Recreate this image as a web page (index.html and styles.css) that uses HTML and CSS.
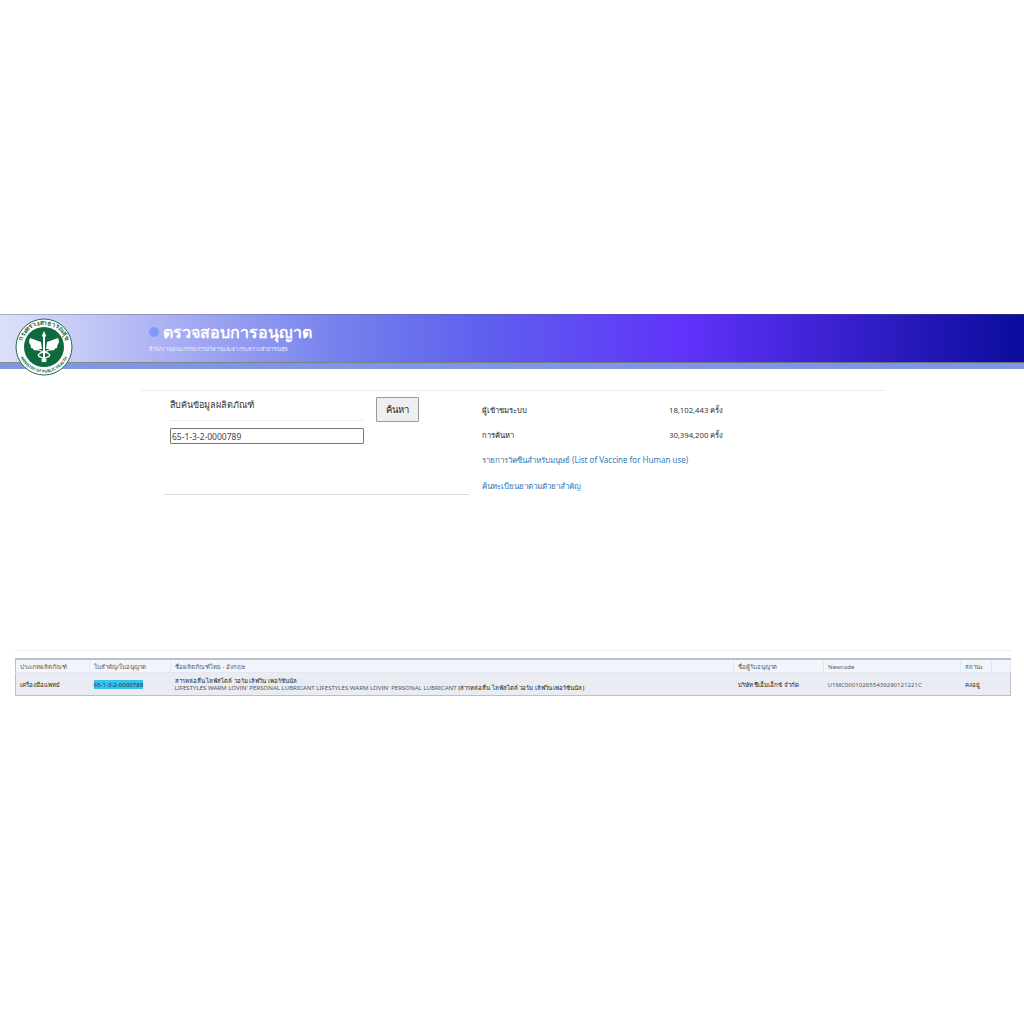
FILE: index.html
```html
<!DOCTYPE html>
<html lang="th">
<head>
  <meta charset="UTF-8" />
  <title>ตรวจสอบการอนุญาต</title>
  <link rel="stylesheet" href="styles.css">
</head>
<body>

  <!-- Banner -->
  <header class="banner">
    <svg class="logo" viewBox="0 0 58 58" aria-label="Logo">
      <defs>
        <path id="ringTop" d="M6.6 29a22.4 22.4 0 0 1 44.8 0" />
        <path id="ringBottom" d="M3.4 29a25.6 25.6 0 0 0 51.2 0" />
      </defs>
      <circle cx="29" cy="29" r="28" fill="#fff" stroke="#1d6b45" stroke-width="1" />
      <circle cx="29" cy="29" r="20" fill="#0f6a3f" />
      <text class="logo-th"><textPath href="#ringTop" startOffset="50%" text-anchor="middle">กระทรวงสาธารณสุข</textPath></text>
      <text class="logo-en"><textPath href="#ringBottom" startOffset="50%" text-anchor="middle">MINISTRY OF PUBLIC HEALTH</textPath></text>
      <path d="M15 20l11 4 1 7h-3l-1 2-2-1-2 .5-1-2-2-.5-.5-3-1-1.500-.5-2.500z" fill="#fff" />
      <path d="M43 20l-11 4-1 7h3l1 2 2-1 2 .5 1-2 2-.5.5-3 1-1.500.5-2.500z" fill="#fff" />
      <path d="M29 13l2.200 5-1.200 1v25h-2V19l-1.200-1z" fill="#fff" />
      <path d="M24 32c3 2 8 2 10 4s-1 3-4 4-4 2-2 4M34 32c-3 2-8 2-10 4s1 3 4 4 4 2 2 4" fill="none" stroke="#fff" stroke-width="1.300" />
    </svg>
    <div class="banner-title">
      <h1><span class="dot"></span>ตรวจสอบการอนุญาต</h1>
      <p>สำนักงานคณะกรรมการอาหารและยา กระทรวงสาธารณสุข</p>
    </div>
  </header>

  <!-- Search + stats -->
  <main class="content">
    <section class="search-panel">
      <div class="search-left">
        <h2>สืบค้นข้อมูลผลิตภัณฑ์</h2>
        <input class="search-input" type="text" value="65-1-3-2-0000789">
      </div>
      <button class="search-btn">ค้นหา</button>
    </section>

    <section class="stats">
      <div class="stat-row"><span class="stat-label">ผู้เข้าชมระบบ</span><span>18,102,443 ครั้ง</span></div>
      <div class="stat-row"><span class="stat-label">การค้นหา</span><span>30,394,200 ครั้ง</span></div>
      <a class="stat-link" href="#">รายการวัคซีนสำหรับมนุษย์ (List of Vaccine for Human use)</a>
      <a class="stat-link" href="#">ค้นทะเบียนยาตามตัวยาสำคัญ</a>
    </section>
  </main>

  <!-- Results -->
  <section class="results">
    <table class="result-table">
      <thead>
        <tr>
          <th class="col-type">ประเภทผลิตภัณฑ์</th>
          <th class="col-no">ใบสำคัญ/ใบอนุญาต</th>
          <th class="col-name">ชื่อผลิตภัณฑ์ไทย - อังกฤษ</th>
          <th class="col-owner">ชื่อผู้รับอนุญาต</th>
          <th class="col-code">Newcode</th>
          <th class="col-status">สถานะ</th>
          <th></th>
        </tr>
      </thead>
      <tbody>
        <tr>
          <td class="thai-dark">เครื่องมือแพทย์</td>
          <td><mark>65-1-3-2-0000789</mark></td>
          <td>
            <span class="thai-dark">สารหล่อลื่น ไลฟ์สไตล์ วอร์ม เลิฟวิ่น เพอร์ซันนัล</span><br>
            LIFESTYLES WARM LOVIN' PERSONAL LUBRICANT LIFESTYLES WARM LOVIN' PERSONAL LUBRICANT <span class="thai-dark">(สารหล่อลื่น ไลฟ์สไตล์ วอร์ม เลิฟวิ่น เพอร์ซันนัล)</span>
          </td>
          <td class="thai-dark">บริษัท ซีเอ็มเอ็กซ์ จำกัด</td>
          <td>U1MC000102655439290121221C</td>
          <td class="thai-dark">คงอยู่</td>
          <td></td>
        </tr>
      </tbody>
    </table>
  </section>

</body>
</html>
```

FILE: styles.css
```css
body {
  margin: 0;
  padding: 314px 0 0;
  font-family: 'Noto Sans', 'Open Sans', 'DejaVu Sans', sans-serif;
  color: #333;
  background: #fff;
}

/* Banner */
.banner {
  position: relative;
  height: 41px;
  padding: 7px 0 0 149px;
  background: linear-gradient(to right, #dde0f9 0%, #7681ec 33%, #5f60ee 47%, #6032fa 67%, #0a0c9c 100%);
  border-bottom: 1px solid rgba(120, 130, 110, 0.85);
  box-shadow: inset 0 1px 0 rgba(90, 90, 110, 0.35), 0 6px 0 #7f96e8;
}

.logo {
  position: absolute;
  left: 15px;
  top: 4px;
  width: 58px;
  height: 58px;
}

.logo-th {
  font-size: 6.500px;
  font-weight: 700;
  fill: #1d6b45;
}

.logo-en {
  font-size: 4px;
  font-weight: 700;
  fill: #1d6b45;
}

.banner-title h1 {
  display: flex;
  align-items: center;
  gap: 4px;
  margin: 0;
  height: 22px;
  font-size: 16px;
  font-weight: 600;
  line-height: 22px;
  color: #fff;
}

.dot {
  width: 10px;
  height: 10px;
  border-radius: 50%;
  background: #7f9bf7;
}

.banner-title p {
  margin: 2px 0 0;
  font-size: 5.500px;
  line-height: 9px;
  color: #eef;
}

/* Search + stats */
.content {
  display: flex;
  margin: 27px 0 0 141px;
  width: 744px;
  height: 105px;
  border-top: 1px solid #eee;
}

.search-panel {
  display: flex;
  align-items: flex-start;
  width: 305px;
  height: 104px;
  margin-left: 23px;
  padding-left: 6px;
  box-sizing: border-box;
  border-bottom: 1px solid #ddd;
}

.search-left {
  width: 194px;
}

.search-left h2 {
  margin: 0;
  padding: 6px 0 8px;
  font-size: 9px;
  font-weight: 400;
  line-height: 15px;
  border-bottom: 1px solid #eee;
}

.search-input {
  display: block;
  box-sizing: border-box;
  width: 194px;
  height: 16px;
  margin-top: 7px;
  padding: 0 1px;
  font-family: inherit;
  font-size: 8.500px;
  color: #444;
  border: 1px solid #777;
  border-radius: 1px;
}

.search-btn {
  width: 43px;
  height: 25px;
  margin: 6px 0 0 12px;
  padding: 0;
  font-family: inherit;
  font-size: 9.500px;
  color: #222;
  background: #efefef;
  border: 1px solid #999;
  border-radius: 1px;
}

.stats {
  display: flex;
  flex-direction: column;
  margin-left: 13px;
  font-size: 7.700px;
}

.stat-row {
  display: flex;
  height: 12px;
  padding-top: 13px;
  line-height: 12px;
}

.stat-label {
  width: 187px;
  color: #222;
}

.stat-link {
  display: block;
  height: 12px;
  padding-top: 13px;
  font-size: 8px;
  line-height: 12px;
  color: #337ab7;
  text-decoration: none;
}

.stat-link + .stat-link {
  padding-top: 14px;
}

/* Results */
.results {
  margin: 154px 13px 0 15px;
  padding-top: 7px;
  border-top: 1px solid #eee;
}

.result-table {
  width: 100%;
  table-layout: fixed;
  border-collapse: collapse;
  font-size: 6.100px;
  line-height: 7px;
  color: #555;
  border: 1px solid #b8c0cc;
  border-top-width: 2px;
}

.result-table th {
  height: 12px;
  padding: 0 4px;
  font-weight: 400;
  text-align: left;
  background: #f3f5fd;
  border-right: 1px solid #e4e7f0;
  border-bottom: 1px solid #e4e7f0;
}

.result-table td {
  height: 22px;
  padding: 0 4px;
  white-space: nowrap;
  background: #e9ecf2;
}

.col-type { width: 65px; }
.col-no { width: 72px; }
.col-name { width: 554px; }
.col-owner { width: 81px; }
.col-code { width: 128px; }
.col-status { width: 22px; }

.thai-dark {
  color: #222;
  font-weight: 500;
}

mark {
  color: #333;
  background: #35c2ee;
}
```
